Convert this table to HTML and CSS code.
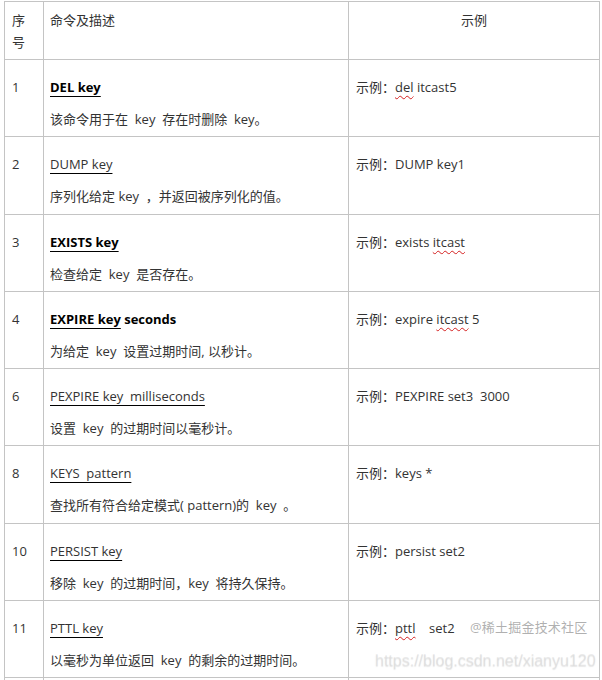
FILE: index.html
```html
<!DOCTYPE html>
<html lang="zh-CN">
<head>
<meta charset="utf-8">
<title>Redis key 命令</title>
<link rel="stylesheet" href="styles.css">
</head>
<body>
<div class="page">
<table class="cmd-table">
  <colgroup>
    <col class="c-no">
    <col class="c-cmd">
    <col class="c-ex">
  </colgroup>
  <thead>
    <tr>
      <th class="no">序号</th>
      <th class="cmd">命令及描述</th>
      <th class="ex center">示例</th>
    </tr>
  </thead>
  <tbody>
    <tr>
      <td class="no">1</td>
      <td class="cmd"><p><a class="link strong">DEL key</a></p><p>该命令用于在&nbsp; key&nbsp; 存在时删除&nbsp; key。</p></td>
      <td class="ex"><p>示例：<span class="typo">del</span> itcast5</p></td>
    </tr>
    <tr>
      <td class="no">2</td>
      <td class="cmd"><p><a class="link">DUMP key</a></p><p>序列化给定 key&nbsp; ，并返回被序列化的值。</p></td>
      <td class="ex"><p>示例：DUMP key1</p></td>
    </tr>
    <tr>
      <td class="no">3</td>
      <td class="cmd"><p><a class="link strong">EXISTS key</a></p><p>检查给定&nbsp; key&nbsp; 是否存在。</p></td>
      <td class="ex"><p>示例：exists <span class="typo">itcast</span></p></td>
    </tr>
    <tr>
      <td class="no">4</td>
      <td class="cmd"><p><a class="link strong">EXPIRE key</a><b class="strong"> seconds</b></p><p>为给定&nbsp; key&nbsp; 设置过期时间, 以秒计。</p></td>
      <td class="ex"><p>示例：expire <span class="typo">itcast</span> 5</p></td>
    </tr>
    <tr>
      <td class="no">6</td>
      <td class="cmd"><p><a class="link">PEXPIRE key&nbsp; milliseconds</a></p><p>设置&nbsp; key&nbsp; 的过期时间以毫秒计。</p></td>
      <td class="ex"><p>示例：PEXPIRE set3&nbsp; 3000</p></td>
    </tr>
    <tr>
      <td class="no">8</td>
      <td class="cmd"><p><a class="link">KEYS&nbsp; pattern</a></p><p>查找所有符合给定模式( pattern)的&nbsp; key&nbsp; 。</p></td>
      <td class="ex"><p>示例：keys *</p></td>
    </tr>
    <tr>
      <td class="no">10</td>
      <td class="cmd"><p><a class="link">PERSIST key</a></p><p>移除&nbsp; key&nbsp; 的过期时间，key&nbsp; 将持久保持。</p></td>
      <td class="ex"><p>示例：persist set2</p></td>
    </tr>
    <tr>
      <td class="no">11</td>
      <td class="cmd"><p><a class="link">PTTL key</a></p><p>以毫秒为单位返回&nbsp; key&nbsp; 的剩余的过期时间。</p></td>
      <td class="ex"><p>示例：<span class="typo">pttl</span>&nbsp;&nbsp;&nbsp; set2</p></td>
    </tr>
    <tr class="tail">
      <td></td>
      <td></td>
      <td></td>
    </tr>
  </tbody>
</table>
<div class="wm-juejin">@稀土掘金技术社区</div>
<div class="wm-csdn">https://blog.csdn.net/xianyu120</div>
</div>
</body>
</html>
```

FILE: styles.css
```css
html, body {
  margin: 0;
  padding: 0;
  background: #ffffff;
}

body {
  font-family: "Open Sans", "Noto Sans CJK SC", sans-serif;
  font-size: 13px;
  color: #333333;
}

.page {
  position: relative;
  padding: 1px 0 0 4px;
  height: 679px;
  overflow: hidden;
}

.cmd-table {
  table-layout: fixed;
  border-collapse: collapse;
  width: 596px;
}

.c-no { width: 39px; }
.c-cmd { width: 305px; }

.cmd-table th,
.cmd-table td {
  border: 1px solid #c4c4c4;
  vertical-align: top;
  text-align: left;
  font-weight: normal;
  line-height: 22px;
  padding: 16px 7px 6px 7px;
}

.cmd-table th {
  padding-top: 7px;
  padding-bottom: 6px;
}

.cmd-table td.cmd,
.cmd-table th.cmd {
  padding-left: 6px;
}

.cmd-table th.center {
  text-align: center;
}

.cmd-table tr.tail td {
  height: 20px;
  padding: 0;
}

.cmd-table p {
  margin: 0 0 10px 0;
}

.cmd-table p:last-child {
  margin-bottom: 0;
}

.cmd-table tbody td.cmd p:last-child {
  padding-bottom: 0.25px;
}

.link {
  color: #333333;
  text-decoration: underline;
  text-decoration-color: #000000;
  text-decoration-thickness: 1px;
  text-underline-offset: 4px;
}

.strong {
  font-weight: 700;
  color: #000000;
}

.typo {
  text-decoration: underline wavy #d42020;
  text-decoration-thickness: 1px;
  text-underline-offset: 3px;
}

.wm-juejin {
  position: absolute;
  left: 470px;
  top: 617px;
  font-size: 13px;
  line-height: 20px;
  letter-spacing: 0.2px;
  color: rgba(150, 150, 150, 0.75);
  text-shadow: 0 0 1px #ffffff;
  white-space: nowrap;
}

.wm-csdn {
  position: absolute;
  left: 375px;
  top: 650px;
  font-family: "Liberation Sans", Arial, sans-serif;
  font-size: 16px;
  line-height: 22px;
  color: rgba(200, 200, 200, 0.35);
  text-shadow: 0 1px 1px rgba(160, 160, 160, 0.25);
  white-space: nowrap;
}
```
